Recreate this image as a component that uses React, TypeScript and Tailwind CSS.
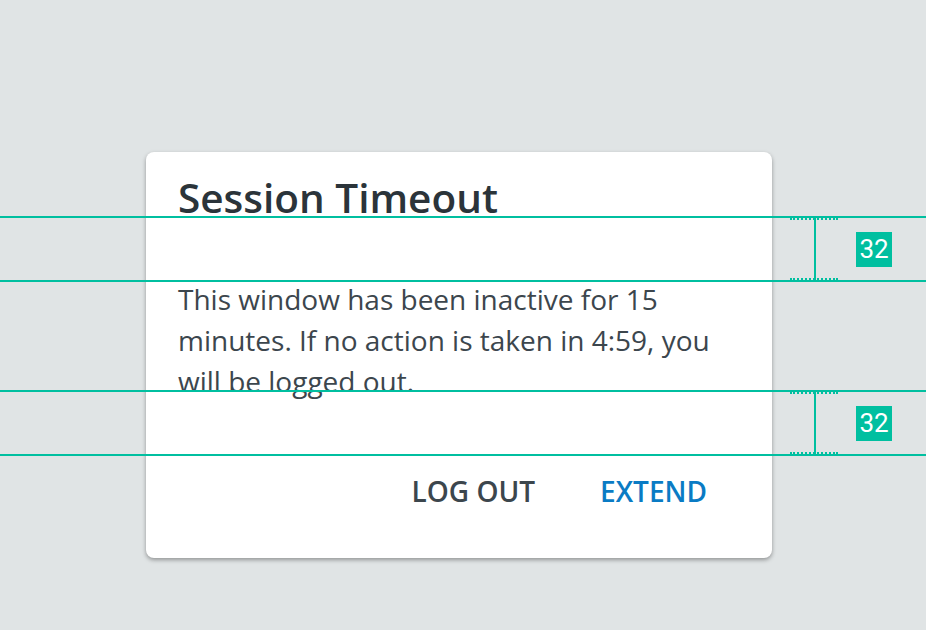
import { FC } from "react";

const teal = "bg-[#00bfa0]";

const Measure: FC<{ top: number; height: number; labelTop: number }> = ({ top, height, labelTop }) => (
    <>
        <div className={`absolute left-0 w-full h-[2px] ${teal}`} style={{ top }} />
        <div className={`absolute left-0 w-full h-[2px] ${teal}`} style={{ top: top + height }} />
        <div className="absolute left-[790px] w-[48px] h-[2px] border-t-2 border-dotted border-[#00bfa0]" style={{ top: top + 2 }} />
        <div className="absolute left-[790px] w-[48px] h-[2px] border-t-2 border-dotted border-[#00bfa0]" style={{ top: top + height - 2 }} />
        <div className={`absolute left-[814px] w-[2px] ${teal}`} style={{ top: top + 2, height: height - 2 }} />
        <div
            className={`absolute left-[856px] w-[36px] h-[35px] ${teal} flex items-center justify-center text-white text-[26px] font-['Roboto',sans-serif]`}
            style={{ top: labelTop }}
        >
            32
        </div>
    </>
);

const App: FC = () => {
    return (
        <div className="relative w-[926px] h-[630px] overflow-hidden bg-[#e0e4e5] font-['Open_Sans',sans-serif]">
            <div className="pt-[152px] pl-[146px]">
                <div className="w-[626px] h-[406px] rounded-lg bg-white shadow-[0_2px_4px_rgba(0,0,0,0.35)] pl-[32px] pt-[22px]">
                    <h1 className="text-[40.5px] leading-[48px] font-semibold text-[#2b343a]">Session Timeout</h1>
                    <p className="mt-[57px] max-w-[545px] text-[28px] leading-[41px] text-[#3c464d]">
                        This window has been inactive for 15 minutes. If no action is taken in 4:59, you will be logged out.
                    </p>
                    <div className="mt-[69px] flex justify-end gap-[65px] pr-[65px] text-[28px] leading-[40px] font-semibold">
                        <button className="text-[#3c464d]">LOG OUT</button>
                        <button className="text-[#0a7bc4]">EXTEND</button>
                    </div>
                </div>
            </div>

            <Measure top={216} height={64} labelTop={232} />
            <Measure top={390} height={64} labelTop={406} />
        </div>
    );
};

export default App;
